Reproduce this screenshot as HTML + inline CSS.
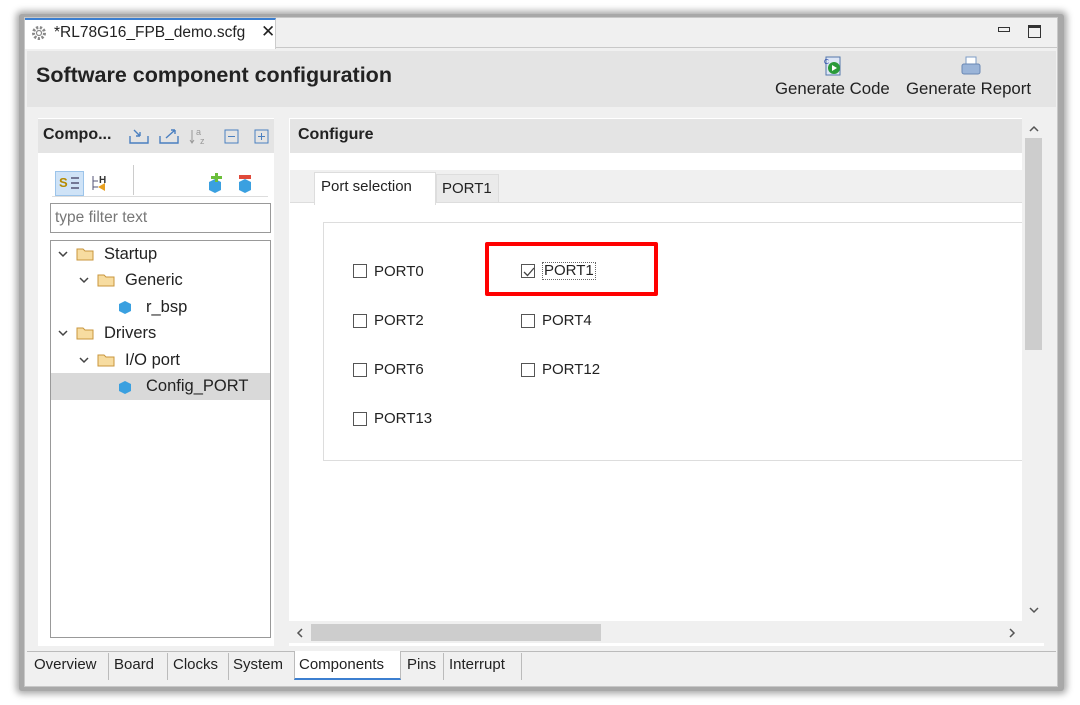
<!DOCTYPE html>
<html><head><style>
*{margin:0;padding:0;box-sizing:border-box}
body{width:1080px;height:705px;background:#fff;position:relative;overflow:hidden;font-family:"Liberation Sans","Noto Sans CJK SC",sans-serif;color:#222}
.a{position:absolute}
.t{position:absolute;font-size:15px;white-space:nowrap;line-height:18px}
.cb{position:absolute;width:14px;height:14px;border:1px solid #555;background:#fff}
</style></head><body>
<div class="a" style="left:19px;top:14px;width:1045px;height:677px;background:#a8a8a8;border-radius:3px;box-shadow:0 0 7px 3px #aaa"></div>
<div class="a" style="left:24px;top:17px;width:1034px;height:670px;background:#f0f0f0;border:1px solid #c8c8c8"></div>
<div class="a" style="left:25px;top:18px;width:251px;height:31px;background:#fff;border-top:2px solid #3c7fd0;border-right:1px solid #ccc"></div>
<div class="a" style="left:276px;top:47px;width:782px;height:1px;background:#c8c8c8"></div>
<svg class="a" style="left:30px;top:24px" width="18" height="18" viewBox="0 0 18 18"><circle cx="9" cy="9" r="5.5" fill="none" stroke="#888" stroke-width="3" stroke-dasharray="2.2 1.6"/><circle cx="9" cy="9" r="2.5" fill="none" stroke="#888" stroke-width="1.2"/></svg>
<div class="t" style="left:54px;top:24px;font-size:15.5px">*RL78G16_FPB_demo.scfg</div>
<div class="t" style="left:261px;top:23px;font-size:17px">✕</div>
<div class="a" style="left:998px;top:27px;width:12px;height:5px;border:1.5px solid #333"></div>
<div class="a" style="left:1028px;top:25px;width:13px;height:13px;border:1.5px solid #333;border-top-width:3px"></div>
<div class="a" style="left:27px;top:51px;width:1029px;height:56px;background:#e4e4e4"></div>
<div class="t" style="left:36px;top:63px;font-size:21.5px;font-weight:bold;line-height:24px">Software component configuration</div>
<svg class="a" style="left:823px;top:56px" width="20" height="22"><rect x="3" y="1" width="14" height="18" fill="#dde6f5" stroke="#5577aa"/><circle cx="11" cy="12" r="6" fill="#2a9a3a"/><path d="M9 9 L14 12 L9 15Z" fill="#fff"/><text x="1" y="8" font-size="7" fill="#2244aa" font-family="Liberation Sans">C</text></svg>
<svg class="a" style="left:960px;top:56px" width="22" height="20"><rect x="6" y="1" width="10" height="9" fill="#fff" stroke="#7b9bc6"/><rect x="2" y="8" width="18" height="10" rx="2" fill="#9ab4d8" stroke="#6a88b4"/></svg>
<div class="t" style="left:775px;top:80px;font-size:16.8px">Generate Code</div>
<div class="t" style="left:906px;top:80px;font-size:16.8px">Generate Report</div>
<div class="a" style="left:38px;top:118px;width:236px;height:528px;background:#fff"></div>
<div class="a" style="left:38px;top:119px;width:236px;height:34px;background:#e4e4e4"></div>
<div class="t" style="left:43px;top:126px;font-size:16px;font-weight:bold">Compo...</div>
<svg class="a" style="left:128px;top:126px" width="150" height="20"><g fill="none" stroke="#4a7fc0" stroke-width="1.4"><path d="M2 10v7h18v-7M6 4l6 6M12 10v-4M12 10h-4"/><path d="M32 10v7h18v-7M38 12l9-8M47 4v4M47 4h-4"/></g><path d="M64 4v13M62 14l2 3 2-3" stroke="#999" fill="none"/><text x="68" y="9" font-size="9" fill="#999">a</text><text x="72" y="18" font-size="9" fill="#999">z</text><rect x="97" y="4" width="13" height="13" fill="none" stroke="#4a7fc0"/><path d="M100 10.5h7" stroke="#4a7fc0"/><rect x="127" y="4" width="13" height="13" fill="none" stroke="#4a7fc0"/><path d="M130 10.5h7M133.5 7v7" stroke="#4a7fc0"/></svg>
<div class="a" style="left:55px;top:171px;width:29px;height:25px;background:#cfe3f7;border:1px solid #9cc4ea"></div>
<svg class="a" style="left:58px;top:173px" width="60" height="20"><text x="1" y="14" font-size="13" font-weight="bold" fill="#b58a00">S</text><path d="M13 5h8M13 10h8M13 15h8" stroke="#557" stroke-width="1.5"/><path d="M35 3v14M35 8h5M35 14h5" stroke="#557"/><text x="41" y="10" font-size="10" font-weight="bold" fill="#333">H</text><path d="M40 14l7-4v8z" fill="#e8a020"/></svg>
<div class="a" style="left:133px;top:165px;width:1px;height:30px;background:#ccc"></div>
<div class="a" style="left:52px;top:196px;width:216px;height:1px;background:#ddd"></div>
<svg class="a" style="left:205px;top:172px" width="55" height="22"><path d="M4 10l6-3 6 3v8l-6 3-6-3z" fill="#3aa0e0"/><path d="M6 4h4v-3h3v3h4v3h-4v3h-3v-3h-4z" fill="#6bbf3a"/><path d="M34 10l6-3 6 3v8l-6 3-6-3z" fill="#3aa0e0"/><rect x="34" y="3" width="12" height="4" fill="#e04a3a"/></svg>
<div class="a" style="left:50px;top:203px;width:221px;height:30px;border:1px solid #999;background:#fff"></div>
<div class="t" style="left:55px;top:209px;color:#777;font-size:15.5px">type filter text</div>
<div class="a" style="left:50px;top:240px;width:221px;height:398px;border:1px solid #999;background:#fff"></div>
<div class="a" style="left:51px;top:373px;width:219px;height:27px;background:#d9d9d9"></div>
<svg class="a" style="left:55px;top:244px" width="90" height="160"><g fill="none" stroke="#444" stroke-width="1.5"><path d="M4 8l4 4 4-4M25 34l4 4 4-4M4 87l4 4 4-4M25 114l4 4 4-4"/></g><g fill="#f7dca0" stroke="#c8963c"><path d="M22 5h6l2 2h8v9h-16z"/><path d="M43 31h6l2 2h8v9h-16z"/><path d="M22 84h6l2 2h8v9h-16z"/><path d="M43 111h6l2 2h8v9h-16z"/></g><g fill="#3aa0e0"><path d="M64 60l6-3 6 3v7l-6 3-6-3z"/><path d="M64 140l6-3 6 3v7l-6 3-6-3z"/></g></svg>
<div class="t" style="left:104px;top:245px;font-size:16.5px">Startup</div>
<div class="t" style="left:125px;top:271px;font-size:16.5px">Generic</div>
<div class="t" style="left:146px;top:298px;font-size:16.5px">r_bsp</div>
<div class="t" style="left:104px;top:324px;font-size:16.5px">Drivers</div>
<div class="t" style="left:125px;top:351px;font-size:16.5px">I/O port</div>
<div class="t" style="left:146px;top:377px;font-size:16.5px">Config_PORT</div>
<div class="a" style="left:289px;top:118px;width:755px;height:528px;background:#fff"></div>
<div class="a" style="left:290px;top:119px;width:732px;height:34px;background:#e4e4e4"></div>
<div class="t" style="left:298px;top:126px;font-size:16px;font-weight:bold">Configure</div>
<div class="a" style="left:290px;top:170px;width:732px;height:33px;background:#f0f0f0;border-bottom:1px solid #ddd"></div>
<div class="a" style="left:314px;top:172px;width:122px;height:33px;background:#fff;border:1px solid #ddd;border-bottom:none"></div>
<div class="t" style="left:321px;top:178px">Port selection</div>
<div class="a" style="left:436px;top:174px;width:63px;height:29px;background:#eaeaea;border:1px solid #ddd"></div>
<div class="t" style="left:442px;top:180px">PORT1</div>
<div class="a" style="left:323px;top:222px;width:700px;height:239px;border:1px solid #ddd;border-right:none"></div>
<div class="cb" style="left:353px;top:264px"></div><div class="t" style="left:374px;top:263px">PORT0</div>
<div class="cb" style="left:521px;top:264px"></div>
<svg class="a" style="left:523px;top:266px" width="12" height="12"><path d="M1 6l3.5 3.5L11 2" fill="none" stroke="#444" stroke-width="1.3"/></svg>
<div class="t" style="left:542px;top:262px;border:1px dotted #666;padding:0 1px;line-height:16px">PORT1</div>
<div class="a" style="left:485px;top:242px;width:173px;height:54px;border:4px solid #f00;border-radius:2px"></div>
<div class="cb" style="left:353px;top:314px"></div><div class="t" style="left:374px;top:312px">PORT2</div>
<div class="cb" style="left:521px;top:314px"></div><div class="t" style="left:542px;top:312px">PORT4</div>
<div class="cb" style="left:353px;top:363px"></div><div class="t" style="left:374px;top:361px">PORT6</div>
<div class="cb" style="left:521px;top:363px"></div><div class="t" style="left:542px;top:361px">PORT12</div>
<div class="cb" style="left:353px;top:412px"></div><div class="t" style="left:374px;top:410px">PORT13</div>
<div class="a" style="left:1022px;top:118px;width:22px;height:503px;background:#f0f0f0"></div>
<div class="a" style="left:1025px;top:138px;width:17px;height:212px;background:#cdcdcd"></div>
<svg class="a" style="left:1028px;top:124px" width="12" height="10"><path d="M2 7l4-4 4 4" fill="none" stroke="#555" stroke-width="1.5"/></svg>
<svg class="a" style="left:1028px;top:605px" width="12" height="10"><path d="M2 3l4 4 4-4" fill="none" stroke="#555" stroke-width="1.5"/></svg>
<div class="a" style="left:289px;top:621px;width:755px;height:22px;background:#f0f0f0"></div>
<div class="a" style="left:311px;top:624px;width:290px;height:17px;background:#cdcdcd"></div>
<svg class="a" style="left:295px;top:627px" width="10" height="12"><path d="M7 2l-4 4 4 4" fill="none" stroke="#555" stroke-width="1.5"/></svg>
<svg class="a" style="left:1007px;top:627px" width="10" height="12"><path d="M3 2l4 4-4 4" fill="none" stroke="#555" stroke-width="1.5"/></svg>
<div class="a" style="left:27px;top:651px;width:1029px;height:1px;background:#bbb"></div>
<div class="t" style="left:34px;top:656px;font-size:15px">Overview</div>
<div class="a" style="left:108px;top:653px;width:1px;height:27px;background:#bbb"></div>
<div class="t" style="left:114px;top:656px;font-size:15px">Board</div>
<div class="a" style="left:167px;top:653px;width:1px;height:27px;background:#bbb"></div>
<div class="t" style="left:173px;top:656px;font-size:15px">Clocks</div>
<div class="a" style="left:228px;top:653px;width:1px;height:27px;background:#bbb"></div>
<div class="t" style="left:233px;top:656px;font-size:15px">System</div>
<div class="a" style="left:294px;top:651px;width:107px;height:29px;background:#fff;border-left:1px solid #bbb;border-right:1px solid #bbb;border-bottom:2px solid #3c7fd0"></div>
<div class="t" style="left:299px;top:656px;font-size:15px">Components</div>
<div class="t" style="left:407px;top:656px;font-size:15px">Pins</div>
<div class="a" style="left:443px;top:653px;width:1px;height:27px;background:#bbb"></div>
<div class="t" style="left:449px;top:656px;font-size:15px">Interrupt</div>
<div class="a" style="left:521px;top:653px;width:1px;height:27px;background:#bbb"></div>
</body></html>
